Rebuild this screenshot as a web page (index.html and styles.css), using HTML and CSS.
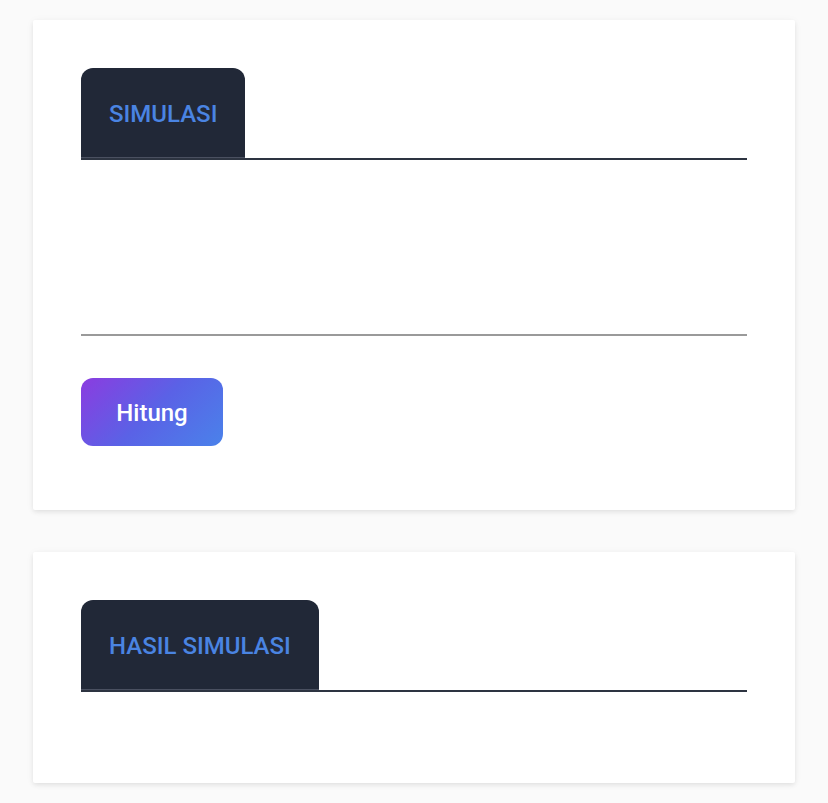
FILE: index.html
```html
<!DOCTYPE html>
<html>
<head>
<meta charset="utf-8">
<link rel="stylesheet" href="styles.css">
</head>
<body>
<div class="page">
  <section class="card">
    <div class="tabbar"><div class="tab">SIMULASI</div></div>
    <div class="form-area"></div>
    <button class="btn">Hitung</button>
  </section>
  <section class="card card-result">
    <div class="tabbar"><div class="tab">HASIL SIMULASI</div></div>
  </section>
</div>
</body>
</html>
```
FILE: styles.css
```css
html, body { margin: 0; padding: 0; }
body {
  background: #fafafa;
  font-family: Roboto, "Noto Sans", sans-serif;
}
.page {
  padding: 20px 33px 21px;
  display: flex;
  flex-direction: column;
  gap: 42px;
}
.card {
  background: #fff;
  padding: 48px 48px 64px;
  box-shadow: 0 2px 4px rgba(0,0,0,0.08), 0 1px 10px rgba(0,0,0,0.04);
  border-radius: 2px;
}
.card-result { padding-bottom: 91px; }
.tabbar {
  display: flex;
  border-bottom: 2px solid #2d3441;
}
.tab {
  background: #212837;
  color: #4a84e2;
  font-size: 24px;
  font-weight: 500;
  height: 90px;
  padding: 2px 28px 0;
  display: flex;
  align-items: center;
  border-radius: 12px 12px 0 0;
  box-sizing: border-box;
  border-bottom: 1px solid #4a5060;
}
.form-area {
  height: 174px;
  border-bottom: 2px solid #9a9a9a;
  margin-bottom: 42px;
}
.btn {
  display: block;
  width: 142px;
  height: 68px;
  border: none;
  border-radius: 12px;
  background: linear-gradient(135deg, #8b3ce0 0%, #5a62e6 50%, #4a82ea 100%);
  color: #fff;
  font-family: Roboto, "Noto Sans", sans-serif;
  font-size: 24px;
  font-weight: 500;
  padding: 2px 0 0;
}
```
